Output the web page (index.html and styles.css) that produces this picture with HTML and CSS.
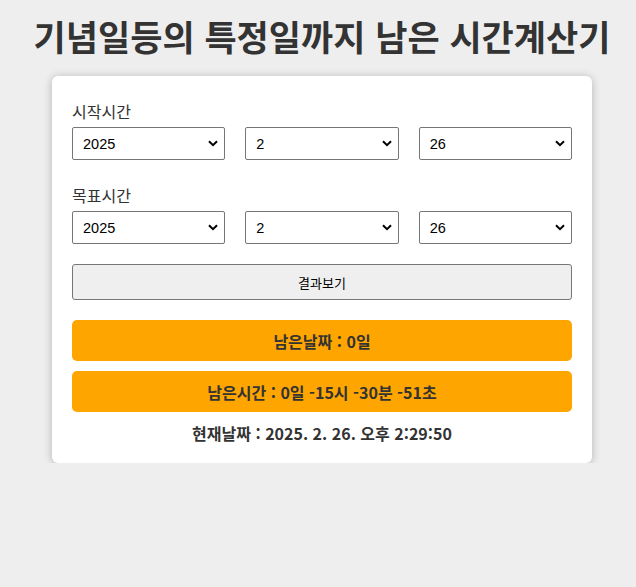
FILE: index.html
```html
<!DOCTYPE html>
<html lang="ko">
<head>
<meta charset="utf-8">
<title>기념일등의 특정일까지 남은 시간계산기</title>
<link rel="stylesheet" href="styles.css">
</head>
<body>
<h1 class="title">기념일등의 특정일까지 남은 시간계산기</h1>
<div class="card">
  <div class="group">
    <label class="label">시작시간</label>
    <div class="row">
      <select class="sel"><option>2025</option></select>
      <select class="sel"><option>2</option></select>
      <select class="sel"><option>26</option></select>
    </div>
  </div>
  <div class="group group-second">
    <label class="label">목표시간</label>
    <div class="row">
      <select class="sel"><option>2025</option></select>
      <select class="sel"><option>2</option></select>
      <select class="sel"><option>26</option></select>
    </div>
  </div>
  <button class="btn">결과보기</button>
  <div class="result result-first">남은날짜 : 0일</div>
  <div class="result">남은시간 : 0일 -15시 -30분 -51초</div>
  <div class="now">현재날짜 : 2025. 2. 26. 오후 2:29:50</div>
</div>
</body>
</html>
```
FILE: styles.css
```css
html, body {
  margin: 0;
  background: #eeeeee;
  font-family: "Noto Sans CJK KR", "Noto Sans", sans-serif;
  color: #333;
}
body {
  padding: 12px 0 0 8px;
}
.title {
  margin: 0 0 16px;
  text-align: center;
  font-size: 35px;
  line-height: 48px;
  font-weight: 700;
  color: #333;
  white-space: nowrap;
}
.card {
  width: 500px;
  margin: 0 auto;
  background: #fff;
  border-radius: 6px;
  box-shadow: 0 1px 8px rgba(0,0,0,0.25);
  padding: 24px 20px 18px;
}
.group-second {
  margin-top: 24px;
}
.label {
  display: block;
  font-size: 16px;
  line-height: 22px;
  color: #333;
  margin-bottom: 5px;
}
.row {
  display: grid;
  grid-template-columns: 1fr 1fr 1fr;
  gap: 20px;
}
.sel {
  appearance: none;
  -webkit-appearance: none;
  height: 33px;
  border: 1px solid #767676;
  border-radius: 2px;
  background: #fff url("data:image/svg+xml;utf8,<svg xmlns='http://www.w3.org/2000/svg' width='10' height='7' viewBox='0 0 10 7'><path d='M1 1.2 L5 5.2 L9 1.2' fill='none' stroke='black' stroke-width='2'/></svg>") no-repeat right 6px center;
  padding: 0 20px 0 10px;
  font-family: "Liberation Sans", Arial, sans-serif;
  font-size: 14.5px;
  color: #000;
}
.btn {
  display: block;
  width: 100%;
  height: 36px;
  margin-top: 20px;
  background: #efefef;
  border: 1px solid #767676;
  border-radius: 3px;
  font-family: "Noto Sans CJK KR", sans-serif;
  font-size: 13px;
  color: #000;
}
.result {
  height: 41px;
  margin-top: 10px;
  background: #ffa500;
  border-radius: 5px;
  display: flex;
  align-items: center;
  justify-content: center;
  font-size: 16px;
  font-weight: 700;
  color: #333;
}
.result-first {
  margin-top: 20px;
}
.now {
  margin-top: 9px;
  text-align: center;
  font-size: 16px;
  line-height: 24px;
  font-weight: 700;
  color: #333;
}
```
